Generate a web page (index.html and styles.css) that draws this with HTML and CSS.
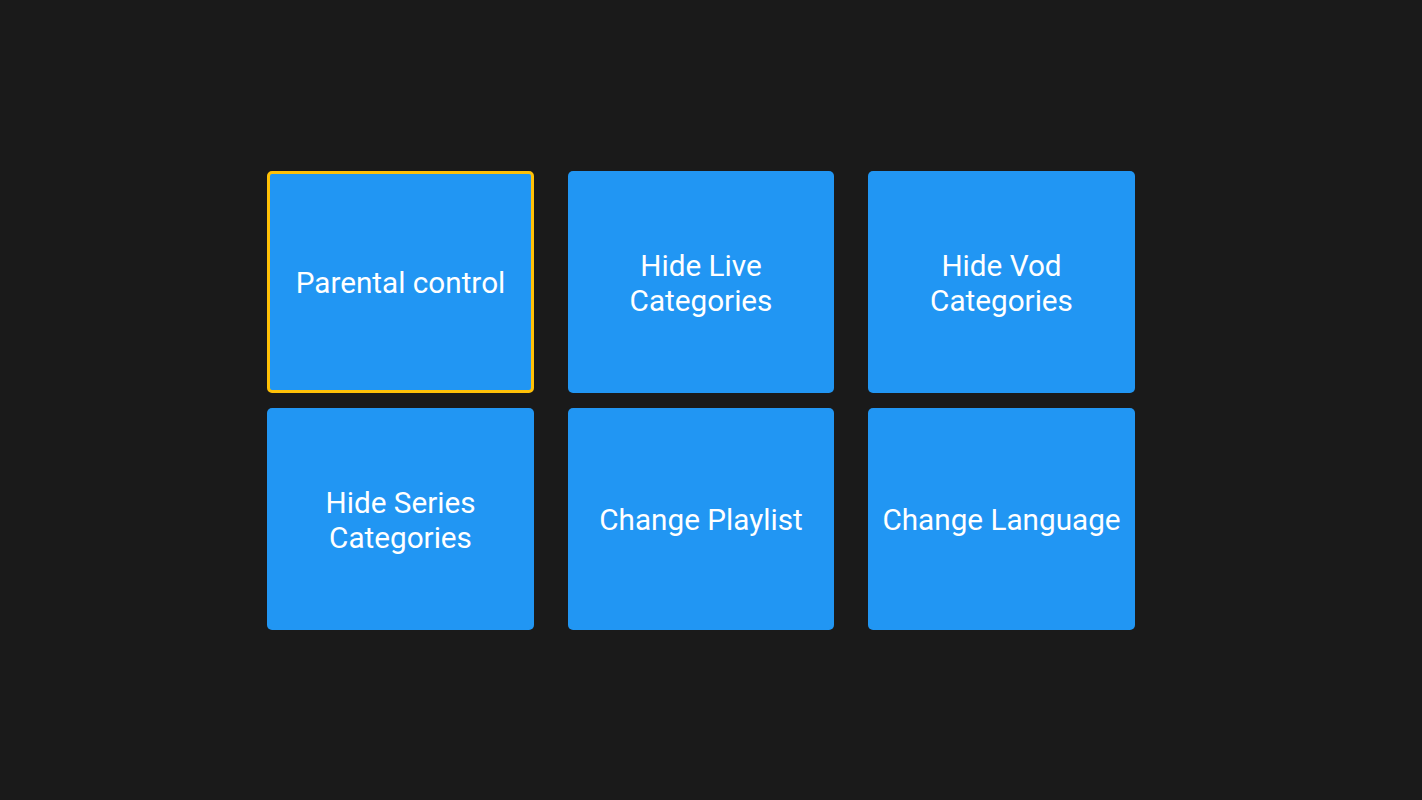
FILE: index.html
```html
<!DOCTYPE html>
<html lang="en">
<head>
    <meta charset="UTF-8">
    <meta name="viewport" content="width=device-width, initial-scale=1.0">
    <title>Settings</title>
    <link rel="stylesheet" href="styles.css">
</head>
<body>
    <main class="screen">
        <div class="menu">
            <div class="tile focused">Parental control</div>
            <div class="tile">Hide Live<br>Categories</div>
            <div class="tile">Hide Vod<br>Categories</div>
            <div class="tile">Hide Series<br>Categories</div>
            <div class="tile">Change Playlist</div>
            <div class="tile">Change Language</div>
        </div>
    </main>
</body>
</html>
```

FILE: styles.css
```css
html, body {
    margin: 0;
    padding: 0;
}

body {
    font-family: Roboto, "Noto Sans", sans-serif;
    background: #1a1a1a;
    color: #fff;
}

.screen {
    width: 1422px;
    height: 800px;
    display: flex;
    align-items: center;
    justify-content: center;
}

.menu {
    display: grid;
    grid-template-columns: repeat(3, 266.5px);
    grid-template-rows: repeat(2, 222px);
    column-gap: 34px;
    row-gap: 15px;
    margin-right: 20px;
}

.tile {
    background: #2196f3;
    border-radius: 5px;
    border: 3px solid transparent;
    box-sizing: border-box;
    display: flex;
    align-items: center;
    justify-content: center;
    text-align: center;
    font-size: 29.7px;
    line-height: 35px;
    padding-top: 2px;
}

.tile.focused {
    border-color: #ffc107;
}
```
